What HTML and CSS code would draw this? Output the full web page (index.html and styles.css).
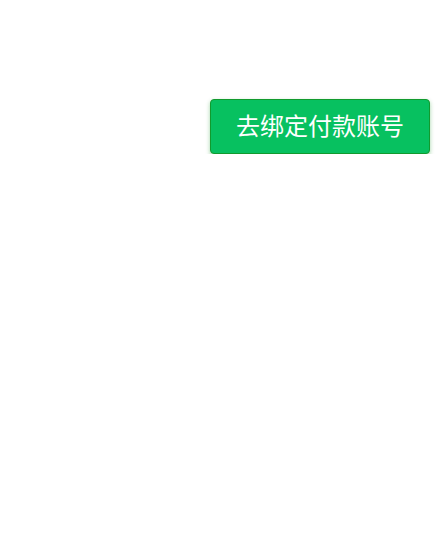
FILE: index.html
```html
<!DOCTYPE html>
<html lang="zh">
<head>
<meta charset="utf-8">
<link rel="stylesheet" href="styles.css">
</head>
<body>
<div class="page">
  <button class="bind-btn">去绑定付款账号</button>
</div>
</body>
</html>
```
FILE: styles.css
```css
html, body {
  margin: 0;
  padding: 0;
  background: #ffffff;
}
.page {
  display: flex;
  justify-content: flex-end;
  padding: 99px 16px 0 0;
}
.bind-btn {
  box-sizing: border-box;
  width: 220px;
  height: 55px;
  padding: 0 0 4px 0;
  margin: 0;
  background: #07c160;
  border: 1px solid #129a2e;
  border-radius: 4px;
  color: #ffffff;
  font-family: "Noto Sans CJK SC", "Noto Sans", sans-serif;
  font-size: 24px;
  line-height: 1;
  box-shadow: 0 2px 4px rgba(26, 150, 40, 0.4);
}
```
